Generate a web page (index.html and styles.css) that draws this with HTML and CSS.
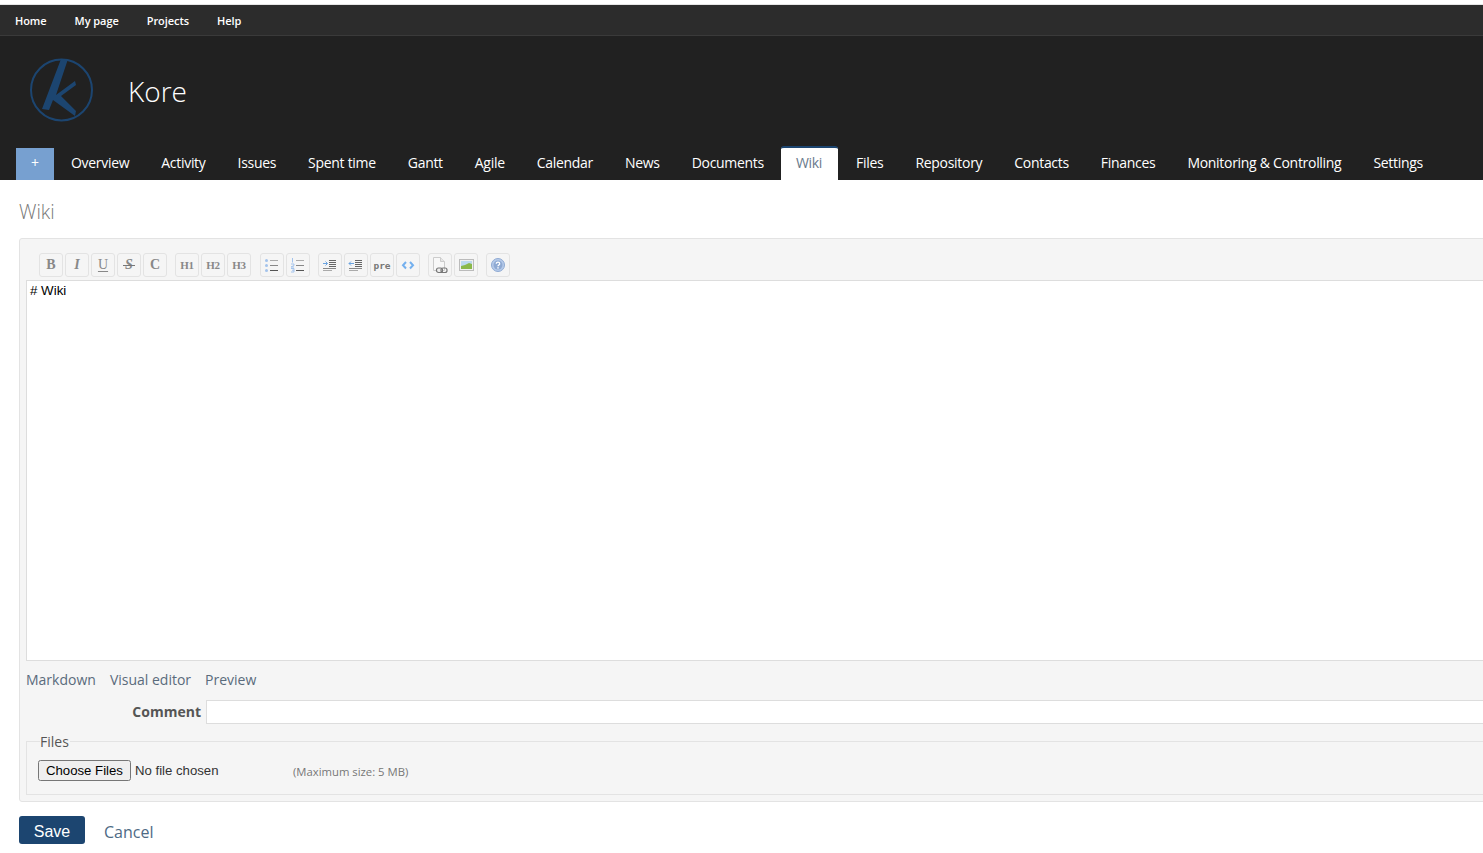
FILE: index.html
```html
<!DOCTYPE html>
<html lang="en">
<head>
  <meta charset="UTF-8" />
  <title>Kore - Wiki</title>
  <link rel="stylesheet" href="styles.css">
</head>
<body>
  <div class="top-menu">
    <a>Home</a>
    <a>My page</a>
    <a>Projects</a>
    <a>Help</a>
  </div>
  <div class="header">
    <div class="project">
      <svg class="logo" width="64" height="64" viewBox="0 0 64 64">
        <circle cx="31.5" cy="32" r="30.5" fill="none" stroke="#1c4570" stroke-width="2"/>
        <path d="M31 1 L38 1 L26 37 L45 23 L46 27 L31 38 L46 53 L45 58 L23 42 L19 52 L12 51 Z" fill="#1c4570"/>
      </svg>
      <h1 class="project-name">Kore</h1>
    </div>
    <div class="tabs">
      <a class="tab-new">+</a>
      <a class="tab">Overview</a>
      <a class="tab">Activity</a>
      <a class="tab">Issues</a>
      <a class="tab">Spent time</a>
      <a class="tab">Gantt</a>
      <a class="tab">Agile</a>
      <a class="tab">Calendar</a>
      <a class="tab">News</a>
      <a class="tab">Documents</a>
      <a class="tab active">Wiki</a>
      <a class="tab">Files</a>
      <a class="tab">Repository</a>
      <a class="tab">Contacts</a>
      <a class="tab">Finances</a>
      <a class="tab">Monitoring &amp; Controlling</a>
      <a class="tab">Settings</a>
    </div>
  </div>

  <div class="content">
    <h2 class="page-title">Wiki</h2>
    <div class="box">
      <div class="toolbar">
        <div class="tool-group">
          <span class="tool serif-big">B</span>
          <span class="tool serif-big italic">I</span>
          <span class="tool serif-big under">U</span>
          <span class="tool serif-big strike">S</span>
          <span class="tool serif-big">C</span>
        </div>
        <div class="tool-group">
          <span class="tool serif-small">H1</span>
          <span class="tool serif-small">H2</span>
          <span class="tool serif-small">H3</span>
        </div>
        <div class="tool-group lists">
          <span class="tool">
            <svg width="16" height="16" viewBox="0 0 16 16">
              <g fill="#a3c3ec"><circle cx="2.500" cy="3.500" r="1.500"/><circle cx="2.500" cy="8.500" r="1.500"/><circle cx="2.500" cy="13.500" r="1.500"/></g>
              <path d="M6 3.500h8" stroke="#aaa"/>
              <path d="M6 8.500h8" stroke="#888"/>
              <path d="M6 13.500h8" stroke="#555"/>
            </svg>
          </span>
          <span class="tool">
            <svg width="16" height="16" viewBox="0 0 16 16">
              <path d="M2.500 1v4.500M1 7h3v1.500L1 10h3M1 11.500h3v3.500H1M2 13.200h2" stroke="#a3c3ec" fill="none"/>
              <path d="M6 3.500h8" stroke="#aaa"/>
              <path d="M6 8.500h8" stroke="#888"/>
              <path d="M6 13.500h8" stroke="#555"/>
            </svg>
          </span>
        </div>
        <div class="tool-group">
          <span class="tool">
            <svg width="16" height="16" viewBox="0 0 16 16">
              <path d="M7 3.500h7M7 5.500h7M7 7.500h7M7 9.500h7" stroke="#666"/>
              <path d="M1 11.500h13" stroke="#888"/>
              <path d="M1 13.500h9" stroke="#aaa"/>
              <path d="M1 6.500h4.500M3.500 4.500l2 2-2 2" stroke="#6aa3e0" fill="none"/>
            </svg>
          </span>
          <span class="tool">
            <svg width="16" height="16" viewBox="0 0 16 16">
              <path d="M7 3.500h7M7 5.500h7M7 7.500h7M7 9.500h7" stroke="#666"/>
              <path d="M1 11.500h13" stroke="#888"/>
              <path d="M1 13.500h9" stroke="#aaa"/>
              <path d="M1 6.500h5M3 4.500l-2 2 2 2" stroke="#6aa3e0" fill="none"/>
            </svg>
          </span>
          <span class="tool tool-pre">pre</span>
          <span class="tool">
            <svg width="16" height="16" viewBox="0 0 16 16">
              <path d="M6 5L3 8.300 6 11.500M10 5l3 3.300-3 3.200" stroke="#74b0ee" stroke-width="2" fill="none"/>
            </svg>
          </span>
        </div>
        <div class="tool-group">
          <span class="tool">
            <svg width="18" height="18" viewBox="0 0 18 18">
              <path d="M2.500 1.500h7l4 4v9h-11z" fill="#f8f8f8" stroke="#ccc"/>
              <path d="M9.500 1.500v4h4" fill="#e6e6e6" stroke="#ccc"/>
              <rect x="5.500" y="12" width="6" height="4.500" rx="2" fill="#eee" stroke="#777" stroke-width="1.200"/>
              <rect x="10" y="12" width="6" height="4.500" rx="2" fill="none" stroke="#777" stroke-width="1.200"/>
            </svg>
          </span>
          <span class="tool">
            <svg width="16" height="16" viewBox="0 0 16 16">
              <rect x="1.500" y="2.500" width="14" height="11" fill="#f0f0f0" stroke="#bbb"/>
              <rect x="3" y="4" width="11" height="8" fill="#bcd9ee"/>
              <path d="M3 9l4-1 4-2 3 1v5H3z" fill="#8ab84a"/>
            </svg>
          </span>
        </div>
        <div class="tool-group">
          <span class="tool">
            <svg width="16" height="16" viewBox="0 0 16 16">
              <circle cx="8" cy="8" r="6.500" fill="#b6cbea" stroke="#8faad3"/>
              <circle cx="8" cy="8" r="4.500" fill="#8faad3"/>
              <path d="M6.300 6.800c0-2.200 3.400-2.200 3.400 0 0 1.300-1.700 1.200-1.700 2.500" stroke="#fff" stroke-width="1.300" fill="none"/>
              <rect x="7.300" y="10.200" width="1.400" height="1.400" fill="#fff"/>
            </svg>
          </span>
        </div>
      </div>
      <textarea class="editor"># Wiki</textarea>
      <div class="editor-modes">
        <a>Markdown</a>
        <a>Visual editor</a>
        <a>Preview</a>
      </div>
      <div class="comment-row">
        <label class="comment-label">Comment</label>
        <input type="text" class="comment-input" />
      </div>
      <fieldset class="files">
        <legend>Files</legend>
        <input type="file" multiple class="file-input" />
        <span class="max-size">(Maximum size: 5 MB)</span>
      </fieldset>
    </div>
    <div class="actions">
      <button class="btn-save">Save</button>
      <a class="cancel">Cancel</a>
    </div>
  </div>
</body>
</html>
```

FILE: styles.css
```css
html, body {
  height: 100%;
  overflow: hidden;
}

body {
  margin: 0;
  padding-top: 5px;
  box-sizing: border-box;
  background-color: #fff;
  color: #555;
  font-family: "Open Sans", sans-serif;
  font-size: 14px;
}

.top-menu {
  display: flex;
  gap: 28px;
  height: 30px;
  padding-left: 15px;
  align-items: center;
  background-color: #2c2c2c;
  border-bottom: 1px solid #3a3a3a;
  box-shadow: 0 -1px 0 #e6e6e6;
  color: #fff;
  font-size: 11px;
  font-weight: 600;
  letter-spacing: -0.06px;
}

.header {
  background-color: #212121;
  color: #fff;
}

.project {
  display: flex;
  align-items: center;
  box-sizing: border-box;
  height: 112px;
  padding: 0 0 4px 30px;
}

.logo {
  flex: none;
}

.project-name {
  margin: 2px 0 0 34px;
  font-size: 28px;
  font-weight: 300;
  line-height: 1;
}

.tabs {
  display: flex;
  height: 32px;
  padding-left: 16px;
  white-space: nowrap;
}

.tab-new {
  width: 38px;
  margin-right: 1px;
  background-color: #77a0d0;
  line-height: 30px;
  text-align: center;
}

.tab {
  padding: 0 16px;
  line-height: 30px;
  letter-spacing: -0.3px;
}

.tab.active {
  background-color: #fff;
  border-top: 2px solid #1c4570;
  border-radius: 3px 3px 0 0;
  padding: 0 16px 0 15px;
  line-height: 30px;
  color: #6a7a8c;
  margin: -2px 2px 0 1px;
  height: 32px;
}

.content {
  width: 1500px;
  padding: 0 0 0 19px;
}

.page-title {
  margin: 0;
  padding: 20px 0 14px;
  font-size: 19.500px;
  font-weight: 300;
  line-height: 24px;
  color: #777;
}

.box {
  box-sizing: border-box;
  height: 564px;
  padding: 0 6px;
  background-color: #f5f5f5;
  border: 1px solid #e3e3e3;
  border-radius: 3px;
}

.toolbar {
  display: flex;
  gap: 8px;
  height: 41px;
  padding: 14px 0 0 13px;
  box-sizing: border-box;
}

.tool-group {
  display: flex;
  gap: 2px;
}

.lists {
  margin-left: 1px;
}

.tool {
  box-sizing: border-box;
  display: flex;
  position: relative;
  width: 24px;
  height: 24px;
  align-items: center;
  justify-content: center;
  border: 1px solid #e3e3e3;
  border-radius: 3px;
  color: #888;
  font-family: "Liberation Serif", serif;
  font-weight: bold;
}

.serif-big {
  font-size: 14px;
}

.serif-small {
  font-size: 11px;
  letter-spacing: -0.3px;
}

.italic {
  font-style: italic;
}

.under {
  font-weight: normal;
  text-decoration: underline;
  text-underline-offset: 2px;
}

.strike {
  font-style: italic;
}

.strike::after {
  content: "";
  position: absolute;
  left: 5px;
  right: 5px;
  top: 11px;
  height: 1px;
  background-color: #777;
}

.tool-pre {
  font-family: "DejaVu Sans Mono", monospace;
  font-size: 9.500px;
  color: #777;
}

.editor {
  display: block;
  box-sizing: border-box;
  width: 100%;
  height: 381px;
  margin: 0;
  padding: 2px 3px;
  background-color: #fff;
  border: 1px solid #ddd;
  color: #000;
  font-family: "Liberation Sans", sans-serif;
  font-size: 13.330px;
  line-height: 15px;
  resize: none;
  outline: none;
}

.editor-modes {
  display: flex;
  gap: 14px;
  padding-top: 9px;
  line-height: 20px;
  color: #5a6b7c;
}

.comment-row {
  display: flex;
  align-items: center;
  gap: 5px;
  margin-top: 10px;
}

.comment-label {
  width: 175px;
  padding-bottom: 2px;
  text-align: right;
  font-weight: bold;
}

.comment-input {
  flex: 1;
  box-sizing: border-box;
  height: 24px;
  margin: 0;
  background-color: #fff;
  border: 1px solid #ddd;
}

.files {
  display: flex;
  align-items: center;
  box-sizing: border-box;
  height: 65px;
  margin: 6px 0 0;
  padding: 0 0 6px 11px;
  border: 1px solid #e3e3e3;
}

.files legend {
  margin-left: 2px;
  padding: 2px 1px 0 0;
  line-height: 20px;
  color: #555;
}

.file-input {
  width: 255px;
  font-family: "Liberation Sans", sans-serif;
  font-size: 13.200px;
  color: #333;
}

.max-size {
  margin-top: 2px;
  font-size: 11.300px;
  color: #777;
}

.actions {
  display: flex;
  align-items: center;
  gap: 19px;
  margin-top: 14px;
}

.btn-save {
  width: 66px;
  height: 28px;
  padding: 3px 0 0;
  background-color: #1c4570;
  border: none;
  border-radius: 3px;
  color: #fff;
  font-family: "Liberation Sans", sans-serif;
  font-size: 16px;
}

.cancel {
  padding-top: 3px;
  font-size: 16px;
  color: #4e6a85;
}
```
